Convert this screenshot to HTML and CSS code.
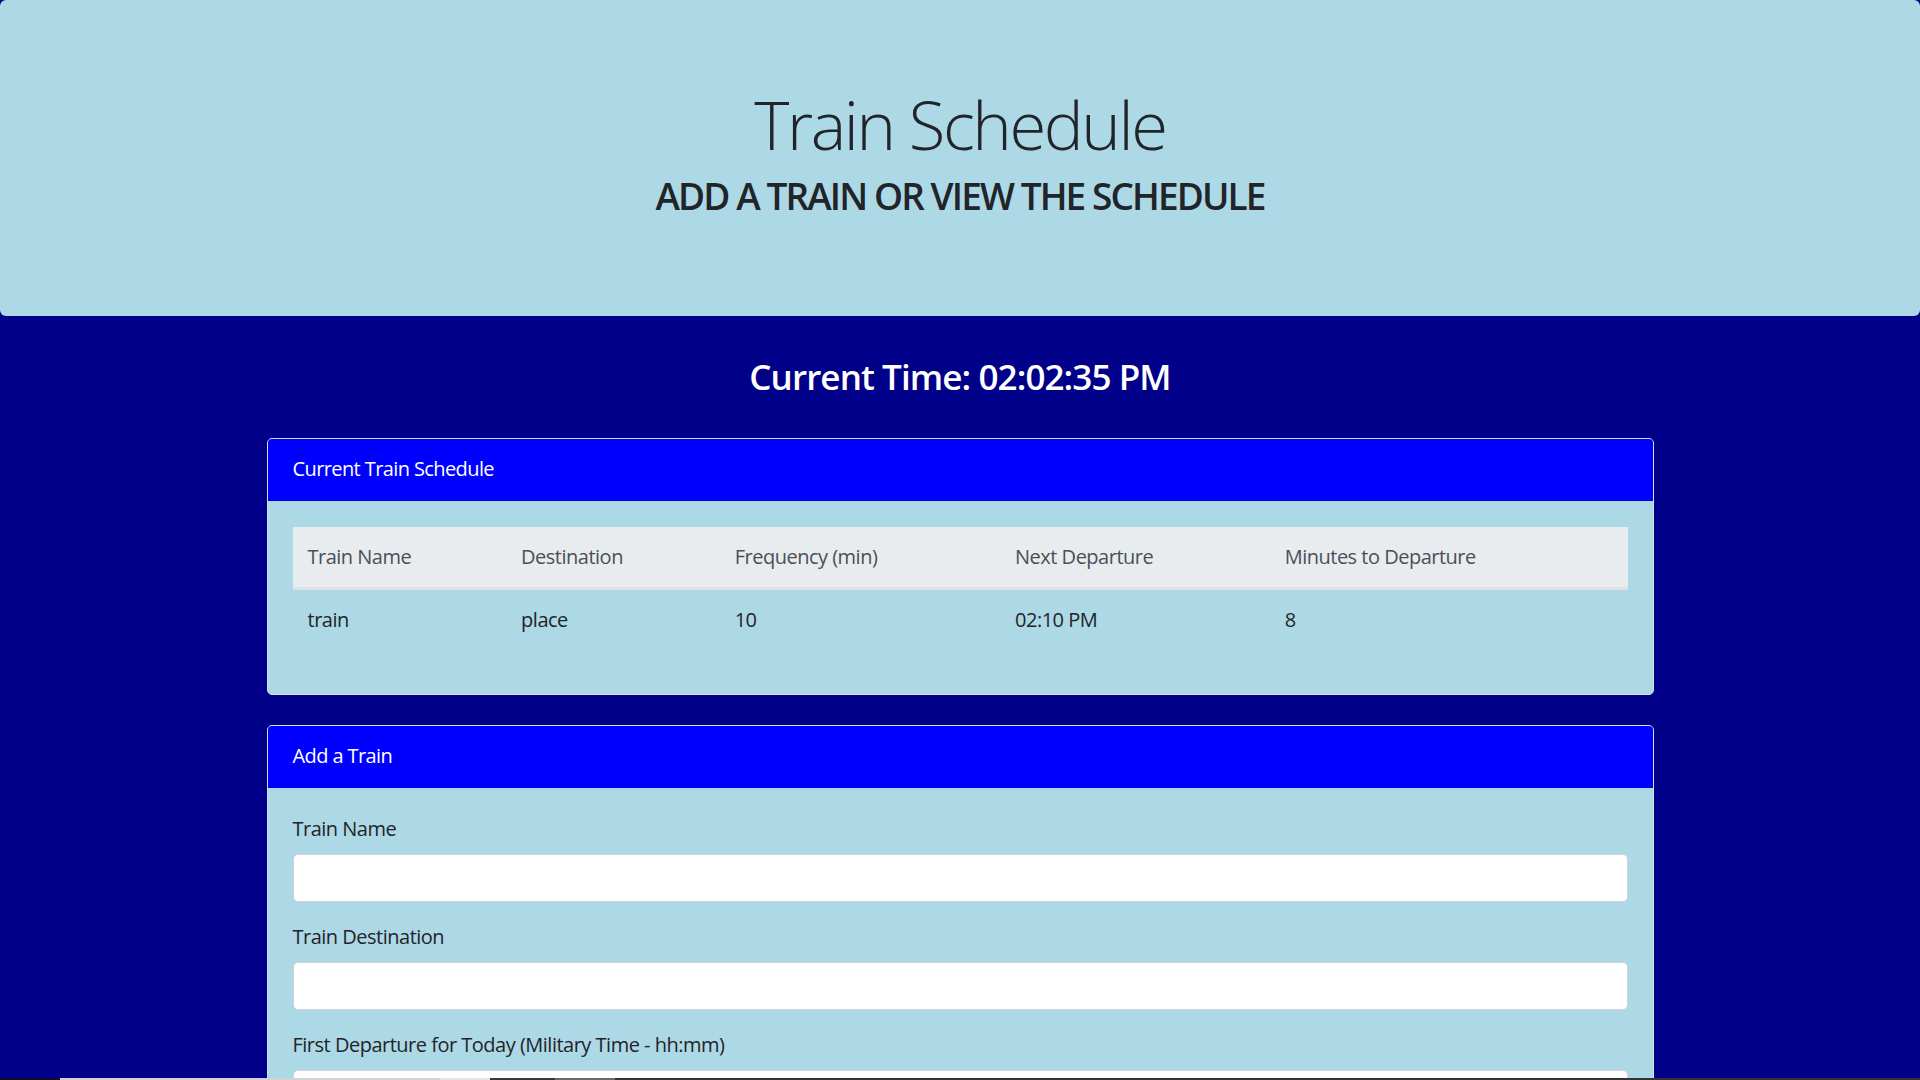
FILE: index.html
```html
<!DOCTYPE html>
<html lang="en">
<head>
<meta charset="utf-8">
<title>Train Schedule</title>
<link rel="stylesheet" href="styles.css">
</head>
<body>
  <header class="jumbotron">
    <h1 class="title">Train Schedule</h1>
    <h2 class="subtitle">ADD A TRAIN OR VIEW THE SCHEDULE</h2>
  </header>

  <main class="container">
    <h3 class="clock">Current Time: 02:02:35 PM</h3>

    <section class="card">
      <div class="card-header">Current Train Schedule</div>
      <div class="card-body">
        <table class="schedule">
          <thead>
            <tr>
              <th class="c-name">Train Name</th>
              <th class="c-dest">Destination</th>
              <th class="c-freq">Frequency (min)</th>
              <th class="c-next">Next Departure</th>
              <th class="c-mins">Minutes to Departure</th>
            </tr>
          </thead>
          <tbody>
            <tr>
              <td>train</td>
              <td>place</td>
              <td>10</td>
              <td>02:10 PM</td>
              <td>8</td>
            </tr>
          </tbody>
        </table>
      </div>
    </section>

    <section class="card card-gap">
      <div class="card-header">Add a Train</div>
      <div class="card-body">
        <form class="train-form">
          <div class="form-group">
            <label for="train-name">Train Name</label>
            <input id="train-name" class="form-control" type="text">
          </div>
          <div class="form-group">
            <label for="train-dest">Train Destination</label>
            <input id="train-dest" class="form-control" type="text">
          </div>
          <div class="form-group">
            <label for="train-first">First Departure for Today (Military Time - hh:mm)</label>
            <input id="train-first" class="form-control" type="text">
          </div>
          <div class="form-group">
            <label for="train-freq">Frequency (min)</label>
            <input id="train-freq" class="form-control" type="text">
          </div>
          <button class="btn" type="button">Submit</button>
        </form>
      </div>
    </section>
  </main>

  <div class="taskbar-edge">
    <span class="seg seg-a"></span>
    <span class="seg seg-b"></span>
    <span class="seg seg-c"></span>
    <span class="seg seg-d"></span>
    <span class="seg seg-e"></span>
    <span class="seg seg-f"></span>
  </div>
</body>
</html>
```

FILE: styles.css
```css
html {
  overflow: hidden;
}

body {
  margin: 0;
  background: #000088;
  font-family: "Open Sans", "Noto Sans", "DejaVu Sans", sans-serif;
  font-size: 20px;
  line-height: 1.5;
  color: #212529;
}

.jumbotron {
  background: #add8e6;
  padding: 84px 40px 81px;
  margin-bottom: 40px;
  border-radius: 6px;
  text-align: center;
}

.title {
  margin: 0 0 10px;
  font-size: 67px;
  font-weight: 300;
  line-height: 1.2;
  letter-spacing: -2.4px;
}

.subtitle {
  margin: 0 0 16px;
  font-size: 37px;
  font-weight: 600;
  line-height: 1.2;
  letter-spacing: -1.9px;
}

.container {
  max-width: 1387px;
  margin: 0 auto;
}

.clock {
  margin: 0 0 40px;
  color: #ffffff;
  text-align: center;
  font-size: 35px;
  font-weight: 600;
  line-height: 1.2;
  letter-spacing: -0.9px;
}

.card {
  background: #add8e6;
  border: 1px solid #d6dde3;
  border-radius: 5px;
  overflow: hidden;
}

.card-gap {
  margin-top: 30px;
}

.card-header {
  background: #0000ff;
  color: #ffffff;
  padding: 15px 25px 16px;
  line-height: 30px;
  border-bottom: 1px solid rgba(0, 0, 0, 0.125);
  letter-spacing: -0.6px;
}

.card-body {
  padding: 26px 25px 25px;
}

.schedule {
  width: 100%;
  border-collapse: collapse;
  margin-bottom: 19px;
  color: #212529;
}

.schedule th,
.schedule td {
  text-align: left;
  padding: 15px;
  line-height: 30px;
  letter-spacing: -0.5px;
}

.schedule th {
  font-weight: 400;
  color: #495057;
  background: #e9ecef;
  border-bottom: 3px solid #dee2e6;
}

.c-name { width: 16%; }
.c-dest { width: 16%; }
.c-freq { width: 21%; }
.c-next { width: 20.2%; }

.form-group {
  margin-bottom: 20px;
}

.form-group label {
  display: block;
  margin-bottom: 10px;
  line-height: 30px;
  letter-spacing: -0.5px;
}

.form-control {
  display: block;
  box-sizing: border-box;
  width: 100%;
  height: 48px;
  padding: 7px 15px;
  font: inherit;
  color: #495057;
  background: #ffffff;
  border: 1px solid #ced4da;
  border-radius: 5px;
}

.btn {
  font: inherit;
  color: #ffffff;
  background: #0000ff;
  border: 1px solid #0000ff;
  border-radius: 5px;
  padding: 7px 15px;
}

.taskbar-edge {
  position: fixed;
  left: 0;
  right: 0;
  bottom: 0;
  height: 2px;
  display: flex;
}

.seg { display: block; height: 100%; }
.seg-a { width: 60px; background: #101020; }
.seg-b { width: 380px; background: #d2d2d2; }
.seg-c { width: 50px; background: #e6e6e6; }
.seg-d { width: 65px; background: #3a3a3a; }
.seg-e { width: 60px; background: #6a6a6a; }
.seg-f { flex: 1; background: #333333; }
```
